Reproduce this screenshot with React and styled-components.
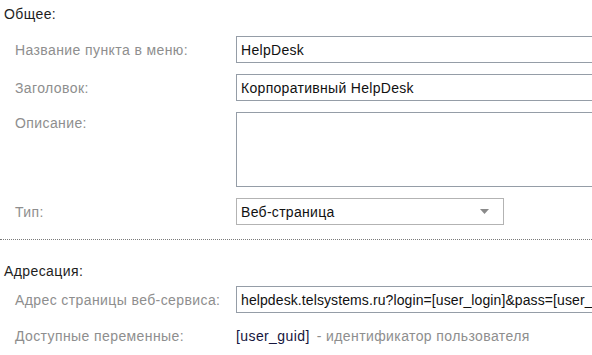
import React from 'react';
import styled, { createGlobalStyle } from 'styled-components';

const GlobalStyle = createGlobalStyle`
  html, body {
    margin: 0;
    padding: 0;
    background: #ffffff;
    overflow: hidden;
  }
  body {
    font-family: 'Liberation Sans', Arial, sans-serif;
  }
`;

const Page = styled.div`
  width: 592px;
  height: 355px;
  overflow: hidden;
  background: #ffffff;
  font-size: 14px;
  letter-spacing: 0.4px;
`;

const SectionTitle = styled.div`
  padding-left: 4px;
  margin-top: ${props => props.top}px;
  line-height: 16px;
  color: #1e1e1e;
`;

const FieldGrid = styled.div`
  display: grid;
  grid-template-columns: 221px 440px;
  row-gap: ${props => props.gap || 11}px;
  padding-left: 15px;
  margin-top: ${props => props.top}px;
`;

const Label = styled.div`
  line-height: 16px;
  color: #8e8e8e;
  align-self: ${props => (props.top ? 'start' : 'center')};
  padding-top: ${props => (props.top ? '3px' : '0')};
`;

const TextInput = styled.input`
  box-sizing: border-box;
  width: 100%;
  height: 27px;
  margin: 0;
  padding: 0 4px;
  border: 1px solid #959da7;
  border-radius: 0;
  outline: none;
  background: #ffffff;
  font-family: 'Liberation Sans', Arial, sans-serif;
  font-size: 14px;
  letter-spacing: ${props => (props.tight ? '0.1px' : '0.3px')};
  color: #111111;
`;

const TextArea = styled.textarea`
  box-sizing: border-box;
  width: 100%;
  height: 75px;
  margin: 0;
  padding: 3px 4px;
  border: 1px solid #959da7;
  border-radius: 0;
  outline: none;
  resize: none;
  display: block;
  font-family: 'Liberation Sans', Arial, sans-serif;
  font-size: 14px;
`;

const SelectBox = styled.div`
  box-sizing: border-box;
  width: 268px;
  height: 27px;
  display: flex;
  align-items: center;
  justify-content: space-between;
  padding: 0 14px 0 4px;
  border: 1px solid #b3b3b3;
  background: #ffffff;
  color: #111111;
  letter-spacing: 0.3px;
`;

const Divider = styled.div`
  margin-top: 14px;
  border-top: 1px dotted #7a7a7a;
`;

const VarLine = styled.div`
  display: flex;
  align-items: center;
  height: 20px;
`;

const VarName = styled.span`
  color: #15153d;
`;

const VarDesc = styled.span`
  margin-left: 7px;
  color: #8e8e8e;
`;

const Arrow = () => (
  <svg width="9" height="5" viewBox="0 0 9 5">
    <path d="M0 0 H9 L4.5 5 Z" fill="#8a8a8a" />
  </svg>
);

export default function App() {
  return (
    <Page>
      <GlobalStyle />
      <SectionTitle top={6}>Общее:</SectionTitle>
      <FieldGrid top={14}>
        <Label>Название пункта в меню:</Label>
        <TextInput readOnly value="HelpDesk" />
        <Label>Заголовок:</Label>
        <TextInput readOnly value="Корпоративный HelpDesk" />
        <Label top>Описание:</Label>
        <TextArea readOnly value="" />
        <Label>Тип:</Label>
        <SelectBox>
          <span>Веб-страница</span>
          <Arrow />
        </SelectBox>
      </FieldGrid>
      <Divider />
      <SectionTitle top={23}>Адресация:</SectionTitle>
      <FieldGrid top={7} gap={13}>
        <Label>Адрес страницы веб-сервиса:</Label>
        <TextInput
          tight
          readOnly
          value="helpdesk.telsystems.ru?login=[user_login]&pass=[user_password]"
        />
        <Label>Доступные переменные:</Label>
        <VarLine>
          <VarName>[user_guid]</VarName>
          <VarDesc>- идентификатор пользователя</VarDesc>
        </VarLine>
      </FieldGrid>
    </Page>
  );
}
